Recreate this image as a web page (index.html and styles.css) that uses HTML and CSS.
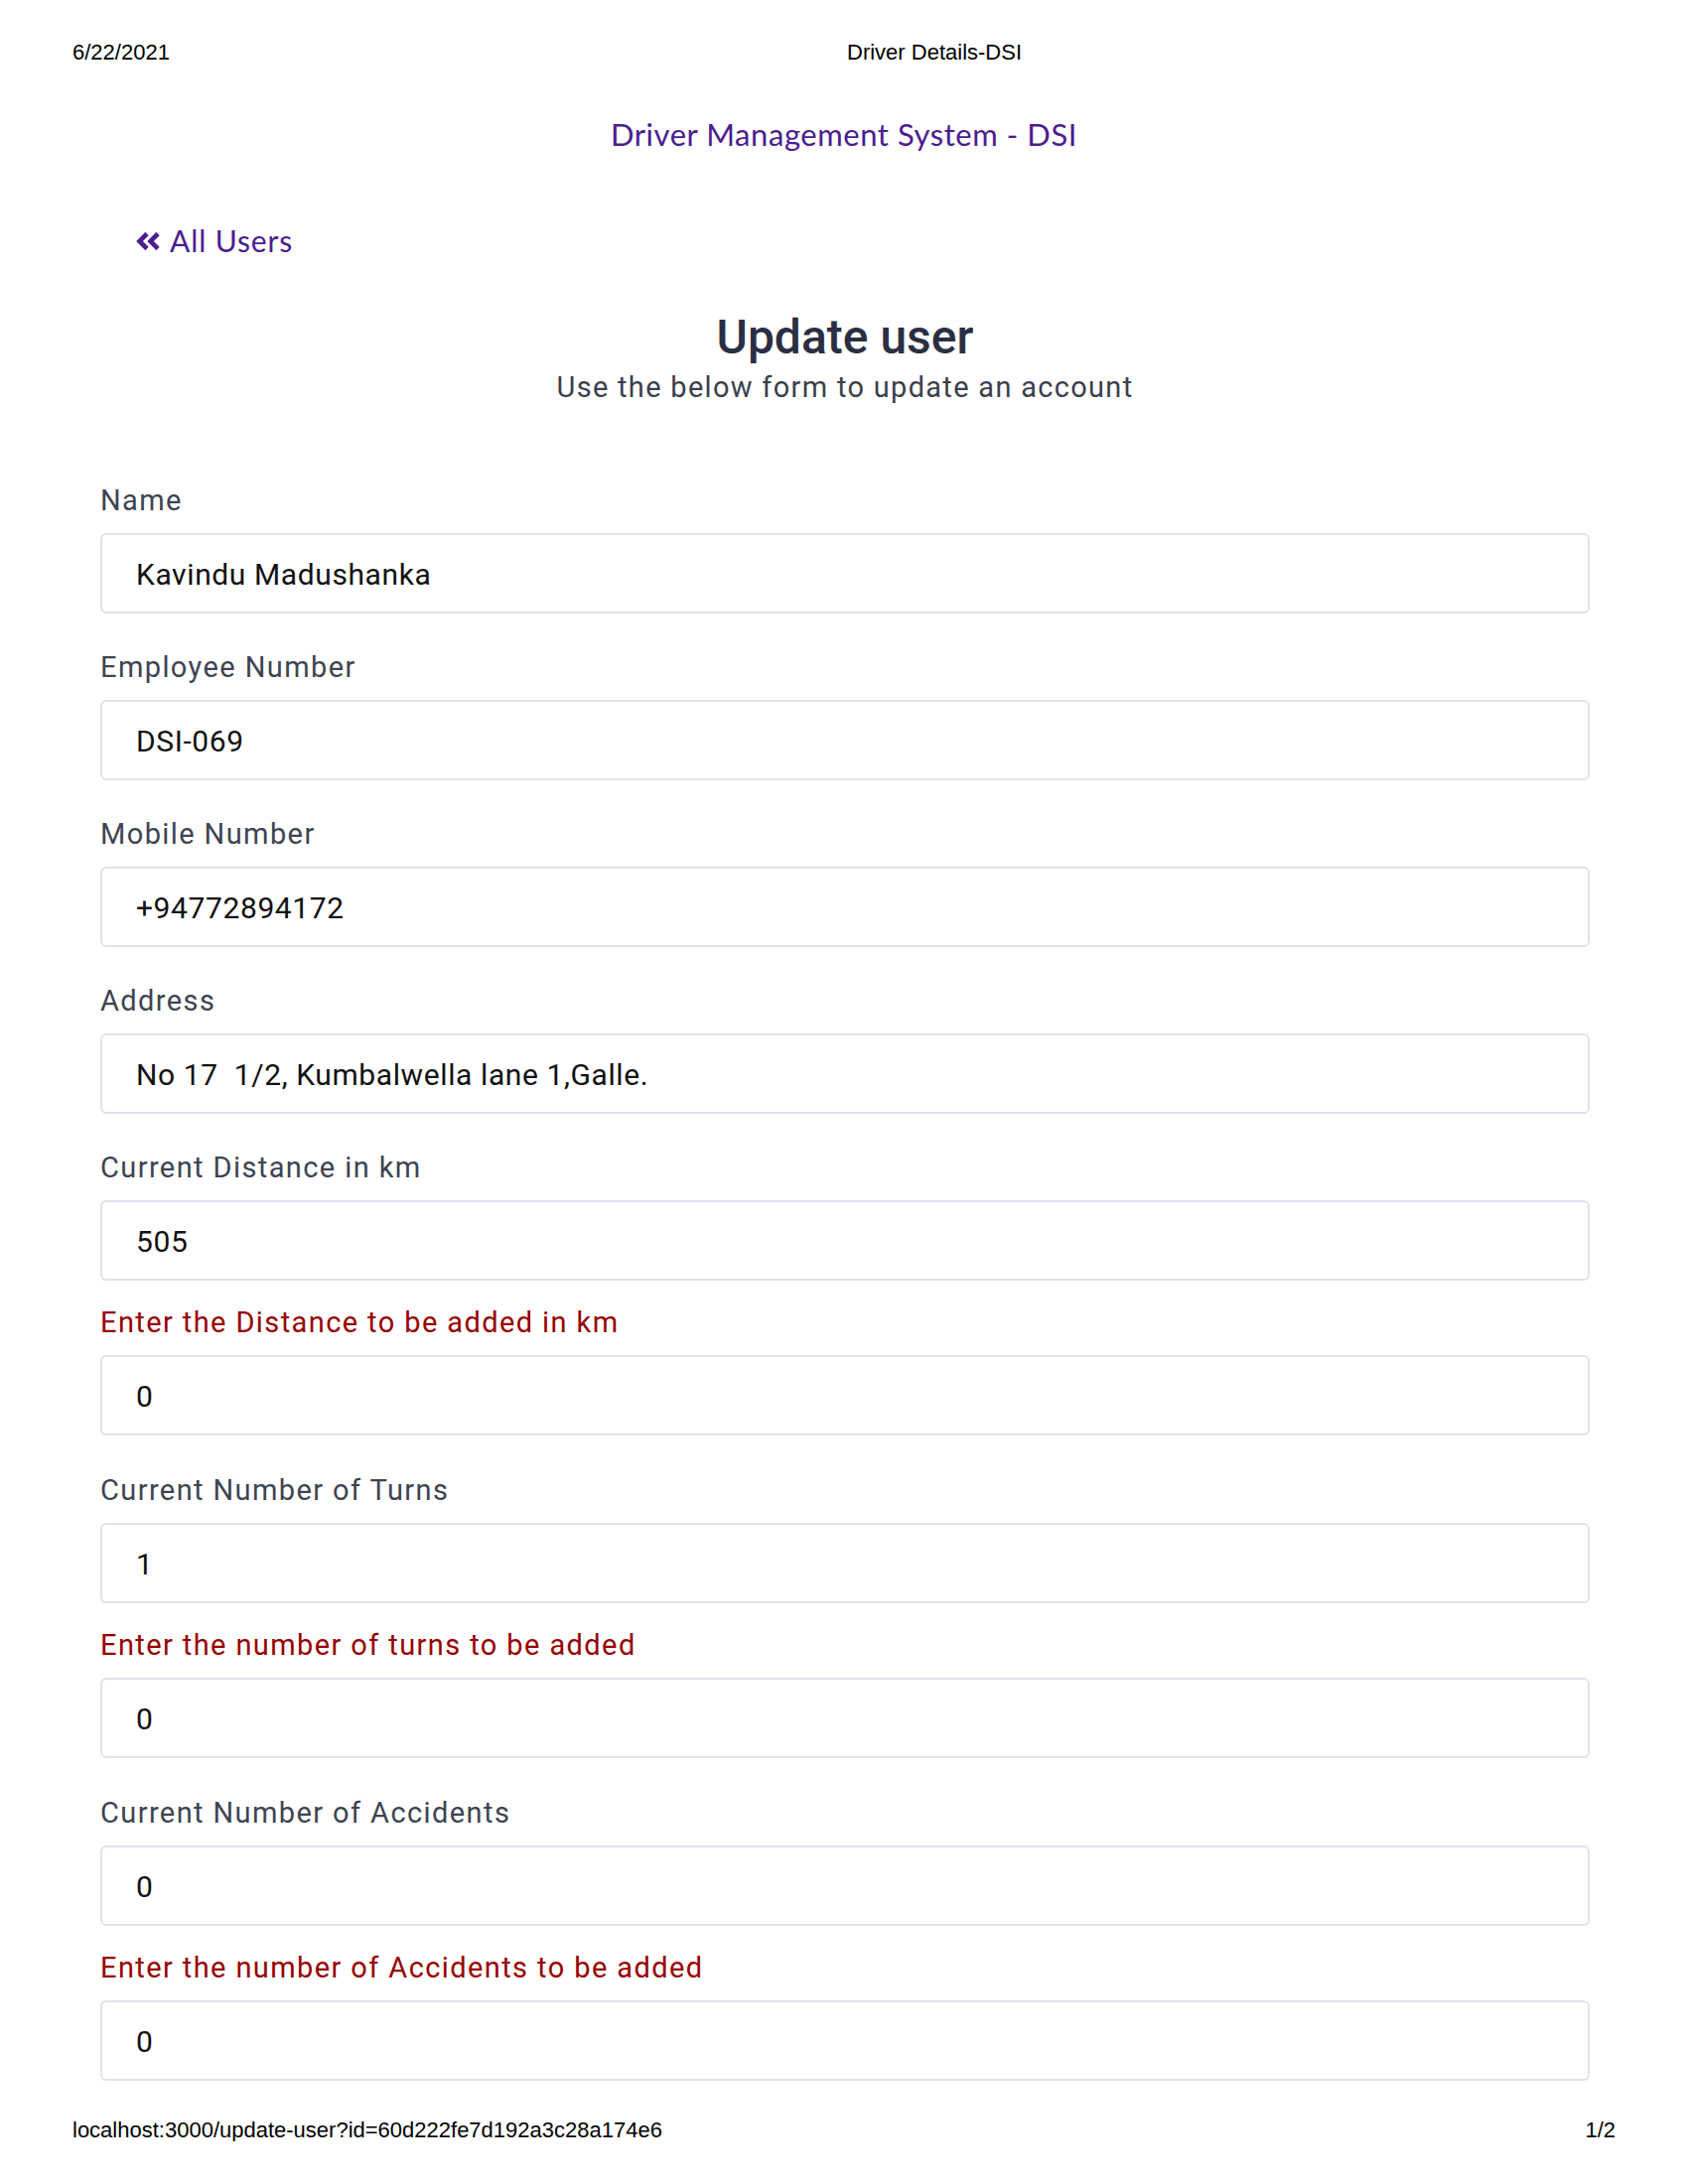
FILE: index.html
```html
<!DOCTYPE html>
<html lang="en">
<head>
<meta charset="utf-8">
<title>Driver Details-DSI</title>
<link rel="stylesheet" href="styles.css">
</head>
<body>
<div class="print-header">
  <span class="print-date">6/22/2021</span>
  <span class="print-title">Driver Details-DSI</span>
</div>

<header class="brand">Driver Management System - DSI</header>

<main class="container">
  <div class="back-row">
    <a class="back-link" href="#">
      <svg class="back-icon" width="26" height="20" viewBox="0 0 26 20" aria-hidden="true">
        <polyline points="12,2.5 4.5,10 12,17.5" fill="none" stroke="currentColor" stroke-width="4.6" stroke-linejoin="miter" stroke-linecap="butt"/>
        <polyline points="23,2.5 15.5,10 23,17.5" fill="none" stroke="currentColor" stroke-width="4.6" stroke-linejoin="miter" stroke-linecap="butt"/>
      </svg>
      <span>All Users</span>
    </a>
  </div>

  <div class="page-title">
    <h1>Update user</h1>
    <p>Use the below form to update an account</p>
  </div>

  <form class="user-form">
    <div class="field">
      <label for="name">Name</label>
      <input id="name" type="text" value="Kavindu Madushanka">
    </div>
    <div class="field">
      <label for="empno">Employee Number</label>
      <input id="empno" type="text" value="DSI-069">
    </div>
    <div class="field">
      <label for="mobile">Mobile Number</label>
      <input id="mobile" type="text" value="+94772894172">
    </div>
    <div class="field">
      <label for="address">Address</label>
      <input id="address" type="text" value="No 17  1/2, Kumbalwella lane 1,Galle.">
    </div>
    <div class="field field--paired">
      <label for="distance">Current Distance in km</label>
      <input id="distance" type="text" value="505">
    </div>
    <div class="field field--added">
      <label class="label--added" for="distance-add">Enter the Distance to be added in km</label>
      <input id="distance-add" type="text" value="0">
    </div>
    <div class="field field--paired">
      <label for="turns">Current Number of Turns</label>
      <input id="turns" type="text" value="1">
    </div>
    <div class="field field--added">
      <label class="label--added" for="turns-add">Enter the number of turns to be added</label>
      <input id="turns-add" type="text" value="0">
    </div>
    <div class="field field--paired">
      <label for="accidents">Current Number of Accidents</label>
      <input id="accidents" type="text" value="0">
    </div>
    <div class="field field--added">
      <label class="label--added" for="accidents-add">Enter the number of Accidents to be added</label>
      <input id="accidents-add" type="text" value="0">
    </div>
  </form>
</main>

<footer class="print-footer">
  <span>localhost:3000/update-user?id=60d222fe7d192a3c28a174e6</span>
  <span>1/2</span>
</footer>
</body>
</html>
```

FILE: styles.css
```css
* {
  box-sizing: border-box;
}

body {
  margin: 0;
  background: #ffffff;
  font-family: Roboto, "Liberation Sans", sans-serif;
  color: #212529;
}

/* print header / footer */
.print-header {
  display: grid;
  grid-template-columns: 780px auto;
  padding: 42px 0 0 73px;
  font-family: "Liberation Sans", Arial, sans-serif;
  font-size: 22px;
  line-height: 22px;
  color: #000;
}

.print-footer {
  display: flex;
  justify-content: space-between;
  margin-top: 39px;
  padding: 0 73px;
  font-family: "Liberation Sans", Arial, sans-serif;
  font-size: 22px;
  line-height: 22px;
  color: #000;
}

/* brand */
.brand {
  margin-top: 51px;
  text-align: center;
  font-family: Lato, "Open Sans", sans-serif;
  font-size: 31px;
  line-height: 40px;
  letter-spacing: 0.55px;
  color: #4b1d8f;
}

.container {
  padding: 0 99px 0 101px;
}

/* back link */
.back-row {
  display: flex;
  margin-top: 67px;
  margin-left: 35px;
}

.back-link {
  display: inline-flex;
  align-items: center;
  gap: 9px;
  font-family: Lato, "Open Sans", sans-serif;
  font-size: 30px;
  line-height: 40px;
  letter-spacing: 0.9px;
  color: #4b1d8f;
  text-decoration: none;
}

.back-icon {
  display: block;
  margin-top: 2px;
}

/* title */
.page-title {
  margin-top: 50px;
  text-align: center;
}

.page-title h1 {
  margin: 0;
  font-size: 48px;
  line-height: 56px;
  font-weight: 500;
  color: #2b2e42;
}

.page-title p {
  margin: 5px 0 0;
  font-size: 29px;
  line-height: 34px;
  letter-spacing: 1.3px;
  color: #3a3f4c;
}

/* form */
.user-form {
  margin-top: 80px;
}

.field {
  margin-bottom: 37px;
}

.field--paired {
  margin-bottom: 25px;
}

.field--added {
  margin-bottom: 38px;
}

.field:last-child {
  margin-bottom: 0;
}

.field label {
  display: block;
  margin-bottom: 16px;
  font-size: 29px;
  line-height: 34px;
  letter-spacing: 1.4px;
  color: #3d4451;
}

.field .label--added {
  color: #970000;
}

.field input {
  display: block;
  width: 100%;
  height: 81px;
  margin: 0;
  padding: 2px 34px 0;
  border: 2px solid #dfe3e9;
  border-radius: 6px;
  background: #fff;
  font-family: Roboto, "Liberation Sans", sans-serif;
  font-size: 30px;
  letter-spacing: 0.6px;
  color: #111;
  outline: none;
}
```
